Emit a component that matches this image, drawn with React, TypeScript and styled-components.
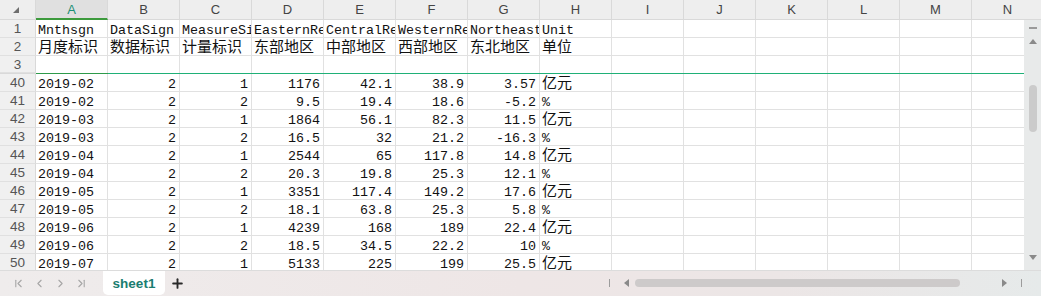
import React from 'react';
import styled, { createGlobalStyle } from 'styled-components';
import { ChevronFirst, ChevronLeft, ChevronRight, ChevronLast, Plus } from 'lucide-react';

const GlobalStyle = createGlobalStyle`
  html, body {
    margin: 0;
    padding: 0;
    background: #ffffff;
    overflow: hidden;
  }
`;

const COLS = ['A', 'B', 'C', 'D', 'E', 'F', 'G', 'H', 'I', 'J', 'K', 'L', 'M', 'N'];
const TEMPLATE = `36px repeat(${COLS.length}, 72px)`;

type CellData = { v: string; num?: boolean; cjk?: boolean };
type RowData = { n: number; cells: CellData[]; short?: boolean };

const txt = (v: string): CellData => ({ v });
const num = (v: string): CellData => ({ v, num: true });
const cjk = (v: string): CellData => ({ v, cjk: true });

const frozenRows: RowData[] = [
  {
    n: 1,
    cells: ['Mnthsgn', 'DataSign', 'MeasureSign', 'EasternRegion', 'CentralRegion', 'WesternRegion', 'Northeast', 'Unit'].map(txt),
  },
  {
    n: 2,
    cells: ['月度标识', '数据标识', '计量标识', '东部地区', '中部地区', '西部地区', '东北地区', '单位'].map(cjk),
  },
  { n: 3, cells: [], short: true },
];

const raw: [string, string, string, string, string, string, string, string][] = [
  ['2019-02', '2', '1', '1176', '42.1', '38.9', '3.57', '亿元'],
  ['2019-02', '2', '2', '9.5', '19.4', '18.6', '-5.2', '%'],
  ['2019-03', '2', '1', '1864', '56.1', '82.3', '11.5', '亿元'],
  ['2019-03', '2', '2', '16.5', '32', '21.2', '-16.3', '%'],
  ['2019-04', '2', '1', '2544', '65', '117.8', '14.8', '亿元'],
  ['2019-04', '2', '2', '20.3', '19.8', '25.3', '12.1', '%'],
  ['2019-05', '2', '1', '3351', '117.4', '149.2', '17.6', '亿元'],
  ['2019-05', '2', '2', '18.1', '63.8', '25.3', '5.8', '%'],
  ['2019-06', '2', '1', '4239', '168', '189', '22.4', '亿元'],
  ['2019-06', '2', '2', '18.5', '34.5', '22.2', '10', '%'],
  ['2019-07', '2', '1', '5133', '225', '199', '25.5', '亿元'],
];

const dataRows: RowData[] = raw.map((r, i) => ({
  n: 40 + i,
  cells: [
    txt(r[0]),
    ...r.slice(1, 7).map(num),
    r[7] === '%' ? txt(r[7]) : cjk(r[7]),
  ],
}));

const Page = styled.div`
  width: 1041px;
  height: 296px;
  display: flex;
  flex-direction: column;
  overflow: hidden;
  background: #fff;
`;

const HeaderRow = styled.div`
  display: grid;
  grid-template-columns: ${TEMPLATE};
  height: 20px;
  flex: none;
  background: #eeeeee;
`;

const Corner = styled.div`
  display: flex;
  align-items: flex-end;
  justify-content: flex-end;
  padding: 0 16px 6px 0;
  border-right: 1px solid #d9d9d9;
  border-bottom: 1px solid #d9d9d9;
`;

const ColHead = styled.div<{ $active?: boolean }>`
  box-sizing: border-box;
  display: flex;
  align-items: center;
  justify-content: center;
  font-family: 'Liberation Sans', Arial, sans-serif;
  font-size: 13px;
  color: ${(p) => (p.$active ? '#1c8f74' : '#444')};
  background: ${(p) => (p.$active ? '#e0e0e0' : 'transparent')};
  border-right: 1px solid #d9d9d9;
  border-bottom: ${(p) => (p.$active ? '2px solid #3c9a3c' : '1px solid #d9d9d9')};
`;

const Body = styled.div`
  flex: 1;
  display: flex;
  min-height: 0;
`;

const Sheet = styled.div`
  flex: 1;
  overflow: hidden;
`;

const Row = styled.div<{ $short?: boolean }>`
  display: grid;
  grid-template-columns: ${TEMPLATE};
  height: ${(p) => (p.$short ? 17 : 18)}px;
`;

const FreezeRule = styled.div`
  display: grid;
  grid-template-columns: 36px 72px 1fr;
  height: 1px;
`;

const FreezeHead = styled.div`
  background: #d9d9d9;
`;

const FreezeActive = styled.div`
  background: #2e9a4a;
`;

const FreezeLine = styled.div`
  background: #1fb077;
`;

const RowHead = styled.div`
  box-sizing: border-box;
  background: #f0f0f0;
  border-right: 1px solid #d9d9d9;
  border-bottom: 1px solid #e0e0e0;
  font-family: 'Liberation Sans', Arial, sans-serif;
  font-size: 13.5px;
  line-height: 18px;
  color: #555;
  text-align: center;
  overflow: hidden;
`;

const Cell = styled.div<{ $num?: boolean; $cjk?: boolean }>`
  box-sizing: border-box;
  padding: 0 3px 0 2px;
  border-right: 1px solid #e1e1e1;
  border-bottom: 1px solid #e1e1e1;
  font-family: ${(p) =>
    p.$cjk ? '"Noto Sans CJK SC", "Liberation Sans", sans-serif' : '"Liberation Mono", "Courier New", monospace'};
  font-size: ${(p) => (p.$cjk ? '15px' : '13.33px')};
  line-height: ${(p) => (p.$cjk ? '16px' : '21px')};
  text-align: ${(p) => (p.$num ? 'right' : 'left')};
  color: #111;
  white-space: nowrap;
  overflow: hidden;
`;

const ShortCell = styled.div`
  border-right: 1px solid #e1e1e1;
`;

const VScroll = styled.div`
  width: 17px;
  flex: none;
  background: #e8eaea;
  display: flex;
  flex-direction: column;
  align-items: center;
  padding-top: 6px;
  box-sizing: border-box;
`;

const Dash = styled.div`
  width: 8px;
  height: 2px;
  background: #9a9a9a;
  margin-top: 1px;
`;

const VThumb = styled.div`
  width: 8px;
  height: 47px;
  border-radius: 4px;
  background: #cbcbcb;
  margin-top: 41px;
`;

const Spacer = styled.div`
  flex: 1;
`;

const Gap = styled.div<{ $w?: number; $h?: number }>`
  flex: none;
  width: ${(p) => p.$w ?? 0}px;
  height: ${(p) => p.$h ?? 0}px;
`;

const TabBar = styled.div`
  height: 26px;
  flex: none;
  display: flex;
  align-items: flex-start;
  background: linear-gradient(90deg, #efecec 0%, #eee6e6 50%, #ece6e6 75%, #e6eaea 100%);
  border-top: 1px solid #dcdcdc;
  box-sizing: border-box;
`;

const NavGroup = styled.div`
  display: flex;
  align-items: center;
  gap: 8px;
  height: 24px;
  padding-left: 12px;
  width: 91px;
  color: #a6a6a6;
`;

const Tab = styled.div`
  width: 62px;
  height: 24px;
  background: #ffffff;
  border-radius: 0 0 5px 5px;
  display: flex;
  align-items: center;
  justify-content: center;
  font-family: 'Liberation Sans', Arial, sans-serif;
  font-weight: bold;
  font-size: 13.5px;
  color: #1a7d70;
`;

const AddTab = styled.div`
  height: 24px;
  display: flex;
  align-items: center;
  margin-left: 5px;
  color: #2a2a2a;
`;

const HScroll = styled.div`
  width: 432px;
  height: 24px;
  display: flex;
  align-items: center;
  flex: none;
`;

const Bar = styled.div`
  width: 1px;
  height: 8px;
  background: #9c9c9c;
`;

const HThumb = styled.div`
  width: 325px;
  height: 8px;
  border-radius: 4px;
  background: #cdcaca;
  margin-left: 6px;
`;

const Tri = ({ dir }: { dir: 'up' | 'down' | 'left' | 'right' }) => {
  const pts = {
    up: '0,5 4,0 8,5',
    down: '0,0 8,0 4,5',
    left: '5,0 5,8 0,4',
    right: '0,0 5,4 0,8',
  }[dir];
  const horiz = dir === 'left' || dir === 'right';
  return (
    <svg width={horiz ? 5 : 8} height={horiz ? 8 : 5} viewBox={horiz ? '0 0 5 8' : '0 0 8 5'}>
      <polygon points={pts} fill="#8a8a8a" />
    </svg>
  );
};

const renderRow = (r: RowData) => (
  <Row key={r.n} $short={r.short}>
    <RowHead>{r.n}</RowHead>
    {COLS.map((c, i) => {
      if (r.short) return <ShortCell key={c} />;
      const d = r.cells[i];
      return (
        <Cell key={c} $num={d?.num} $cjk={d?.cjk}>
          {d?.v}
        </Cell>
      );
    })}
  </Row>
);

export default function App() {
  return (
    <Page>
      <GlobalStyle />
      <HeaderRow>
        <Corner>
          <svg width="6" height="6" viewBox="0 0 6 6">
            <polygon points="6,0 6,6 0,6" fill="#6e6e6e" />
          </svg>
        </Corner>
        {COLS.map((c) => (
          <ColHead key={c} $active={c === 'A'}>
            {c}
          </ColHead>
        ))}
      </HeaderRow>
      <Body>
        <Sheet>
          {frozenRows.map(renderRow)}
          <FreezeRule>
            <FreezeHead />
            <FreezeActive />
            <FreezeLine />
          </FreezeRule>
          {dataRows.map(renderRow)}
        </Sheet>
        <VScroll>
          <Dash />
          <Gap $h={10} />
          <Tri dir="up" />
          <VThumb />
          <Spacer />
          <Tri dir="down" />
          <Gap $h={10} />
        </VScroll>
      </Body>
      <TabBar>
        <NavGroup>
          <ChevronFirst size={13} strokeWidth={2} />
          <ChevronLeft size={13} strokeWidth={2} />
          <ChevronRight size={13} strokeWidth={2} />
          <ChevronLast size={13} strokeWidth={2} />
        </NavGroup>
        <Tab>sheet1</Tab>
        <AddTab>
          <Plus size={15} strokeWidth={3} />
        </AddTab>
        <Spacer />
        <HScroll>
          <Bar />
          <Gap $w={14} />
          <Tri dir="left" />
          <HThumb />
          <Spacer />
          <Tri dir="right" />
          <Gap $w={14} />
          <Bar />
          <Gap $w={19} />
        </HScroll>
      </TabBar>
    </Page>
  );
}
